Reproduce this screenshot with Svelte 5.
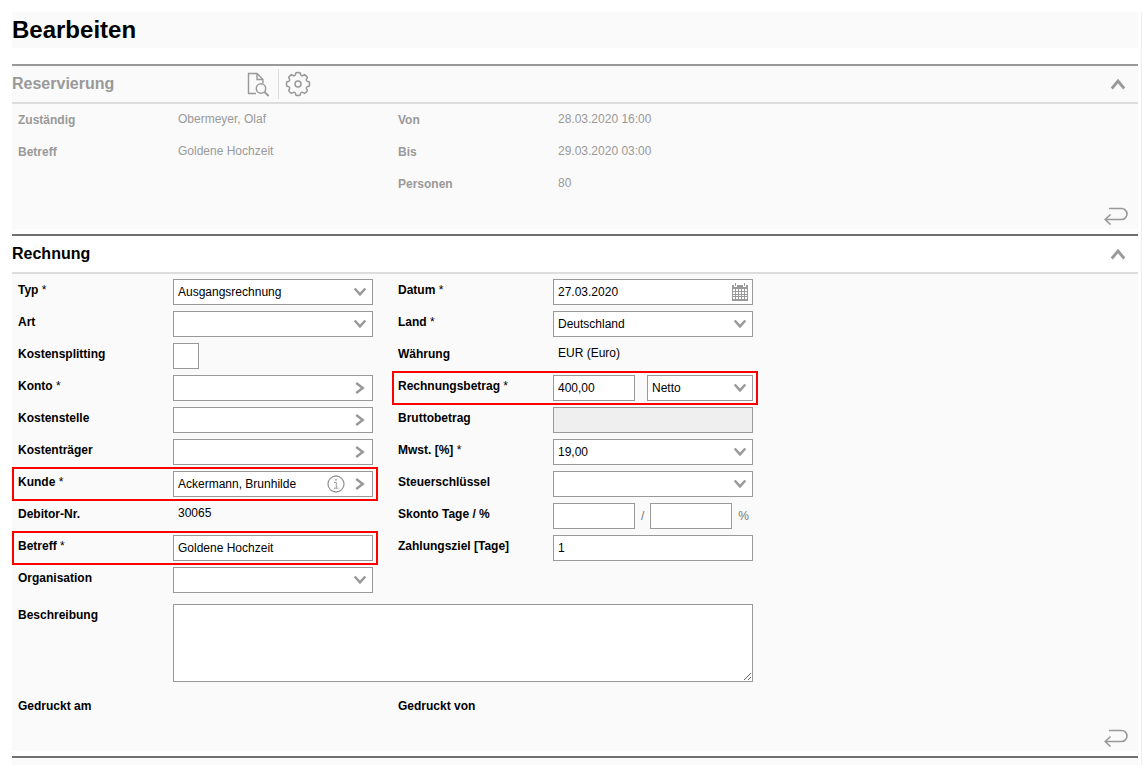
<script lang="ts">
  let reservationOpen = $state(true);
  let invoiceOpen = $state(true);

  type Field = {
    id: string;
    label: string;
    kind: 'select' | 'lookup' | 'check' | 'text' | 'static' | 'date' | 'amount' | 'discount' | 'disabled';
    value?: string;
    required?: boolean;
    info?: boolean;
    marked?: boolean;
  };

  const left: Field[] = [
    { id: 'typ', label: 'Typ', kind: 'select', value: 'Ausgangsrechnung', required: true },
    { id: 'art', label: 'Art', kind: 'select' },
    { id: 'splitting', label: 'Kostensplitting', kind: 'check' },
    { id: 'konto', label: 'Konto', kind: 'lookup', required: true },
    { id: 'kostenstelle', label: 'Kostenstelle', kind: 'lookup' },
    { id: 'kostentraeger', label: 'Kostenträger', kind: 'lookup' },
    { id: 'kunde', label: 'Kunde', kind: 'lookup', value: 'Ackermann, Brunhilde', required: true, info: true, marked: true },
    { id: 'debitor', label: 'Debitor-Nr.', kind: 'static', value: '30065' },
    { id: 'betreff', label: 'Betreff', kind: 'text', value: 'Goldene Hochzeit', required: true, marked: true },
    { id: 'organisation', label: 'Organisation', kind: 'select' }
  ];

  const right: Field[] = [
    { id: 'datum', label: 'Datum', kind: 'date', value: '27.03.2020', required: true },
    { id: 'land', label: 'Land', kind: 'select', value: 'Deutschland', required: true },
    { id: 'waehrung', label: 'Währung', kind: 'static', value: 'EUR (Euro)' },
    { id: 'betrag', label: 'Rechnungsbetrag', kind: 'amount', value: '400,00', required: true, marked: true },
    { id: 'brutto', label: 'Bruttobetrag', kind: 'disabled' },
    { id: 'mwst', label: 'Mwst. [%]', kind: 'select', value: '19,00', required: true },
    { id: 'steuer', label: 'Steuerschlüssel', kind: 'select' },
    { id: 'skonto', label: 'Skonto Tage / %', kind: 'discount' },
    { id: 'ziel', label: 'Zahlungsziel [Tage]', kind: 'text', value: '1' }
  ];

  const reservationLeft = [
    ['Zuständig', 'Obermeyer, Olaf'],
    ['Betreff', 'Goldene Hochzeit']
  ];
  const reservationRight = [
    ['Von', '28.03.2020 16:00'],
    ['Bis', '29.03.2020 03:00'],
    ['Personen', '80']
  ];

  // Outline of an eight-toothed gear centred on 13,13: broad blunt teeth joined by small round notches
  function gearPath() {
    const point = (r: number, deg: number) => {
      const a = (deg * Math.PI) / 180;
      return `${(13 + r * Math.cos(a)).toFixed(2)} ${(13 + r * Math.sin(a)).toFixed(2)}`;
    };
    let d = `M${point(11.5, -10)}`;
    for (let i = 0; i < 8; i++) {
      const c = i * 45;
      d += `A11.500 11.500 0 0 1 ${point(11.5, c + 10)}L${point(10.1, c + 14)}`;
      d += `A1.700 1.700 0 0 0 ${point(10.1, c + 31)}L${point(11.5, c + 35)}`;
    }
    return d + 'Z';
  }
</script>

{#snippet chevronUp()}
  <svg width="16" height="12" viewBox="0 0 16 12" aria-hidden="true"><path d="M1.800 10.500 8 3l6.200 7.500" fill="none" stroke="#999" stroke-width="2.800" /></svg>
{/snippet}

{#snippet returnArrow()}
  <svg width="24" height="18" viewBox="0 0 24 18" aria-hidden="true"><path d="M5 1.500h12.500a5.500 5.500 0 0 1 0 11H1.500M6.500 7.500 1.200 12.500l5.300 5" fill="none" stroke="#999" stroke-width="1.600" /></svg>
{/snippet}

{#snippet dropdown(id: string, value: string, name: string)}
  <div class="control">
    <select {id} aria-label={name}><option>{value}</option></select>
    <svg class="arrow" width="14" height="10" viewBox="0 0 14 10" aria-hidden="true"><path d="M1.700 1.500 7 7.300l5.300-5.800" fill="none" stroke="#999" stroke-width="2.500" /></svg>
  </div>
{/snippet}

{#snippet row(f: Field)}
  <div class="row" class:marked={f.marked}>
    {#if f.kind === 'static'}
      <span class="label">{f.label}</span>
      <span class="value">{f.value}</span>
    {:else}
      <label class="label" for={f.id}>{f.label}{#if f.required}<span class="star">&nbsp;*</span>{/if}</label>
      {#if f.kind === 'select'}
        {@render dropdown(f.id, f.value ?? '', f.label)}
      {:else if f.kind === 'lookup'}
        <div class="control">
          <input id={f.id} type="text" value={f.value ?? ''} />
          <div class="tools">
            {#if f.info}
              <button type="button" aria-label="Info">
                <svg width="18" height="18" viewBox="0 0 18 18" aria-hidden="true"><circle cx="9" cy="9" r="8" fill="none" stroke="#999" stroke-width="1.300" /><path d="M7 7.500h2.300v5.500M6.800 13.200h4.600" fill="none" stroke="#999" /><circle cx="9" cy="4.800" r="0.900" fill="#999" /></svg>
              </button>
            {/if}
            <button type="button" aria-label="Auswählen">
              <svg width="10" height="12" viewBox="0 0 10 12" aria-hidden="true"><path d="M1.200 1 7.700 6l-6.500 5" fill="none" stroke="#999" stroke-width="2.500" /></svg>
            </button>
          </div>
        </div>
      {:else if f.kind === 'date'}
        <div class="control">
          <input id={f.id} type="text" value={f.value} />
          <div class="tools date">
            <button type="button" aria-label="Kalender">
              <svg width="16" height="18" viewBox="0 0 16 18" aria-hidden="true">
                <path d="M0 2h16v16H0z" fill="#999" />
                <path d="M2 0h3v4H2zM11 0h3v4h-3z" fill="#fff" />
                <path d="M3 0h1v3H3zM12 0h1v3h-1z" fill="#999" />
                <path d="M1 6h2v2H1zM4 6h2v2H4zM7 6h2v2H7zM10 6h2v2h-2zM13 6h2v2h-2zM1 9h2v2H1zM4 9h2v2H4zM7 9h2v2H7zM10 9h2v2h-2zM13 9h2v2h-2zM1 12h2v1H1zM4 12h2v1H4zM7 12h2v1H7zM10 12h2v1h-2zM13 12h2v1h-2zM1 14h2v2H1zM4 14h2v2H4zM7 14h2v2H7zM10 14h2v2h-2zM13 14h2v2h-2z" fill="#fff" />
              </svg>
            </button>
          </div>
        </div>
      {:else if f.kind === 'check'}
        <input id={f.id} type="checkbox" />
      {:else if f.kind === 'amount'}
        <div class="pair wide">
          <input id={f.id} class="short" type="text" value={f.value} />
          {@render dropdown('basis', 'Netto', 'Netto oder Brutto')}
        </div>
      {:else if f.kind === 'discount'}
        <div class="pair">
          <input id={f.id} class="short" type="text" />
          <span>/</span>
          <input class="short" type="text" aria-label="Skonto %" />
          <span>%</span>
        </div>
      {:else}
        <input id={f.id} type="text" value={f.value ?? ''} disabled={f.kind === 'disabled'} />
      {/if}
    {/if}
  </div>
{/snippet}

<main>
  <h1>Bearbeiten</h1>

  <section class="reservation">
    <header>
      <h2>Reservierung</h2>
      <div class="actions">
        <button type="button" aria-label="Vorschau">
          <svg width="24" height="26" viewBox="0 0 24 26" aria-hidden="true"><path d="M10 22.500H2.500v-20h8.500l6 6v4M11 2.500v6h6" fill="none" stroke="#999" stroke-width="1.400" /><circle cx="15" cy="17.500" r="4.700" fill="none" stroke="#999" stroke-width="1.500" /><path d="m18.500 21 4.200 4" stroke="#999" stroke-width="1.800" /></svg>
        </button>
        <button type="button" aria-label="Einstellungen">
          <svg width="26" height="26" viewBox="0 0 26 26" aria-hidden="true"><path d={gearPath()} fill="none" stroke="#999" stroke-width="1.500" stroke-linejoin="round" /><circle cx="13" cy="13" r="3" fill="none" stroke="#999" stroke-width="1.500" /></svg>
        </button>
      </div>
      <button class="toggle" type="button" aria-label="Reservierung ein- oder ausklappen" onclick={() => (reservationOpen = !reservationOpen)}>{@render chevronUp()}</button>
    </header>
    {#if reservationOpen}
      <div class="body">
        <div class="columns">
          {#each [reservationLeft, reservationRight] as column}
            <div class="column">
              {#each column as [label, value]}
                <div class="row"><span class="label">{label}</span><span class="value">{value}</span></div>
              {/each}
            </div>
          {/each}
        </div>
        <footer><button type="button" aria-label="Zurück">{@render returnArrow()}</button></footer>
      </div>
    {/if}
  </section>

  <section>
    <header>
      <h2>Rechnung</h2>
      <button class="toggle" type="button" aria-label="Rechnung ein- oder ausklappen" onclick={() => (invoiceOpen = !invoiceOpen)}>{@render chevronUp()}</button>
    </header>
    {#if invoiceOpen}
      <form class="body">
        <div class="columns">
          {#each [left, right] as column}
            <div class="column">
              {#each column as f (f.id)}{@render row(f)}{/each}
            </div>
          {/each}
        </div>
        <div class="row description">
          <label class="label" for="beschreibung">Beschreibung</label>
          <textarea id="beschreibung"></textarea>
        </div>
        <div class="columns">
          <div class="row"><span class="label">Gedruckt am</span></div>
          <div class="row"><span class="label">Gedruckt von</span></div>
        </div>
        <footer><button type="button" aria-label="Zurück">{@render returnArrow()}</button></footer>
      </form>
    {/if}
  </section>

  <div class="rest"></div>
</main>

<style>
  :global(body) {
    background: #fff;
  }
  main {
    display: flex;
    flex-direction: column;
    box-sizing: border-box;
    min-height: calc(100vh - 12px);
    margin-top: 12px;
    padding: 0 3px 0 12px;
    border-right: 1px solid #eee;
    font: 12px/22px 'Liberation Sans', Arial, sans-serif;
    color: #000;
  }
  h1 {
    margin: 0 0 16px;
    background: #fafafa;
    font-size: 24px;
    line-height: 36px;
  }
  section {
    border-top: 2px solid #707070;
    margin-bottom: 5px;
  }
  header {
    display: flex;
    align-items: center;
    height: 36px;
    border-bottom: 2px solid #ddd;
  }
  h2 {
    margin: 0;
    font-size: 16px;
    line-height: 34px;
  }
  .reservation {
    border-top-color: #999;
    color: #999;
  }
  .reservation header {
    background: #fafafa;
  }
  .reservation h2 {
    width: 234px;
  }
  button {
    display: flex;
    padding: 0;
    border: 0;
    background: none;
    cursor: pointer;
  }
  .toggle {
    margin-left: auto;
    padding-right: 12px;
  }
  .actions {
    display: flex;
  }
  .actions button {
    height: 30px;
    align-items: center;
  }
  .actions button + button {
    margin-left: 8px;
    padding-left: 6px;
    border-left: 1px solid #ddd;
  }
  .body {
    padding: 5px 10px 0 6px;
    background: #fafafa;
  }
  .columns {
    display: flex;
    gap: 25px;
  }
  .column {
    display: flex;
    flex-direction: column;
    gap: 6px;
  }
  .row {
    position: relative;
    display: grid;
    grid-template-columns: 155px 200px;
    min-height: 26px;
  }
  .marked::after {
    content: '';
    position: absolute;
    inset: -4px -5px -4px -6px;
    border: 2px solid #f00;
    pointer-events: none;
  }
  .label {
    font-weight: bold;
  }
  .star {
    font-weight: normal;
  }
  .value {
    padding-left: 5px;
    line-height: 20px;
  }
  input,
  select,
  textarea {
    box-sizing: border-box;
    width: 100%;
    height: 26px;
    margin: 0;
    padding: 0 4px;
    border: 1px solid #999;
    border-radius: 0;
    background: #fff;
    color: #000;
    font: inherit;
  }
  select {
    appearance: none;
  }
  input:disabled {
    background: #efefef;
  }
  input[type='checkbox'] {
    appearance: none;
    width: 26px;
  }
  input[type='checkbox']:checked {
    background: #999;
    box-shadow: inset 0 0 0 5px #fff;
  }
  .control {
    position: relative;
    flex: 1;
    height: 26px;
  }
  .arrow {
    position: absolute;
    top: 8px;
    right: 6px;
    pointer-events: none;
  }
  .tools {
    position: absolute;
    top: 0;
    right: 8px;
    display: flex;
    align-items: center;
    gap: 10px;
    height: 26px;
  }
  .tools.date {
    right: 5px;
  }
  .pair {
    display: flex;
    align-items: center;
    gap: 6px;
    height: 26px;
    color: #777;
  }
  .pair.wide {
    gap: 12px;
  }
  .short {
    width: 82px;
  }
  .description {
    grid-template-columns: 155px 580px;
    margin: 11px 0 13px;
  }
  textarea {
    display: block;
    height: 78px;
  }
  footer {
    display: flex;
    justify-content: flex-end;
    align-items: flex-end;
    box-sizing: border-box;
    height: 30px;
    padding-bottom: 4px;
  }
  .rest {
    flex: 1;
    border-top: 2px solid #707070;
    background: #fafafa;
  }
</style>
